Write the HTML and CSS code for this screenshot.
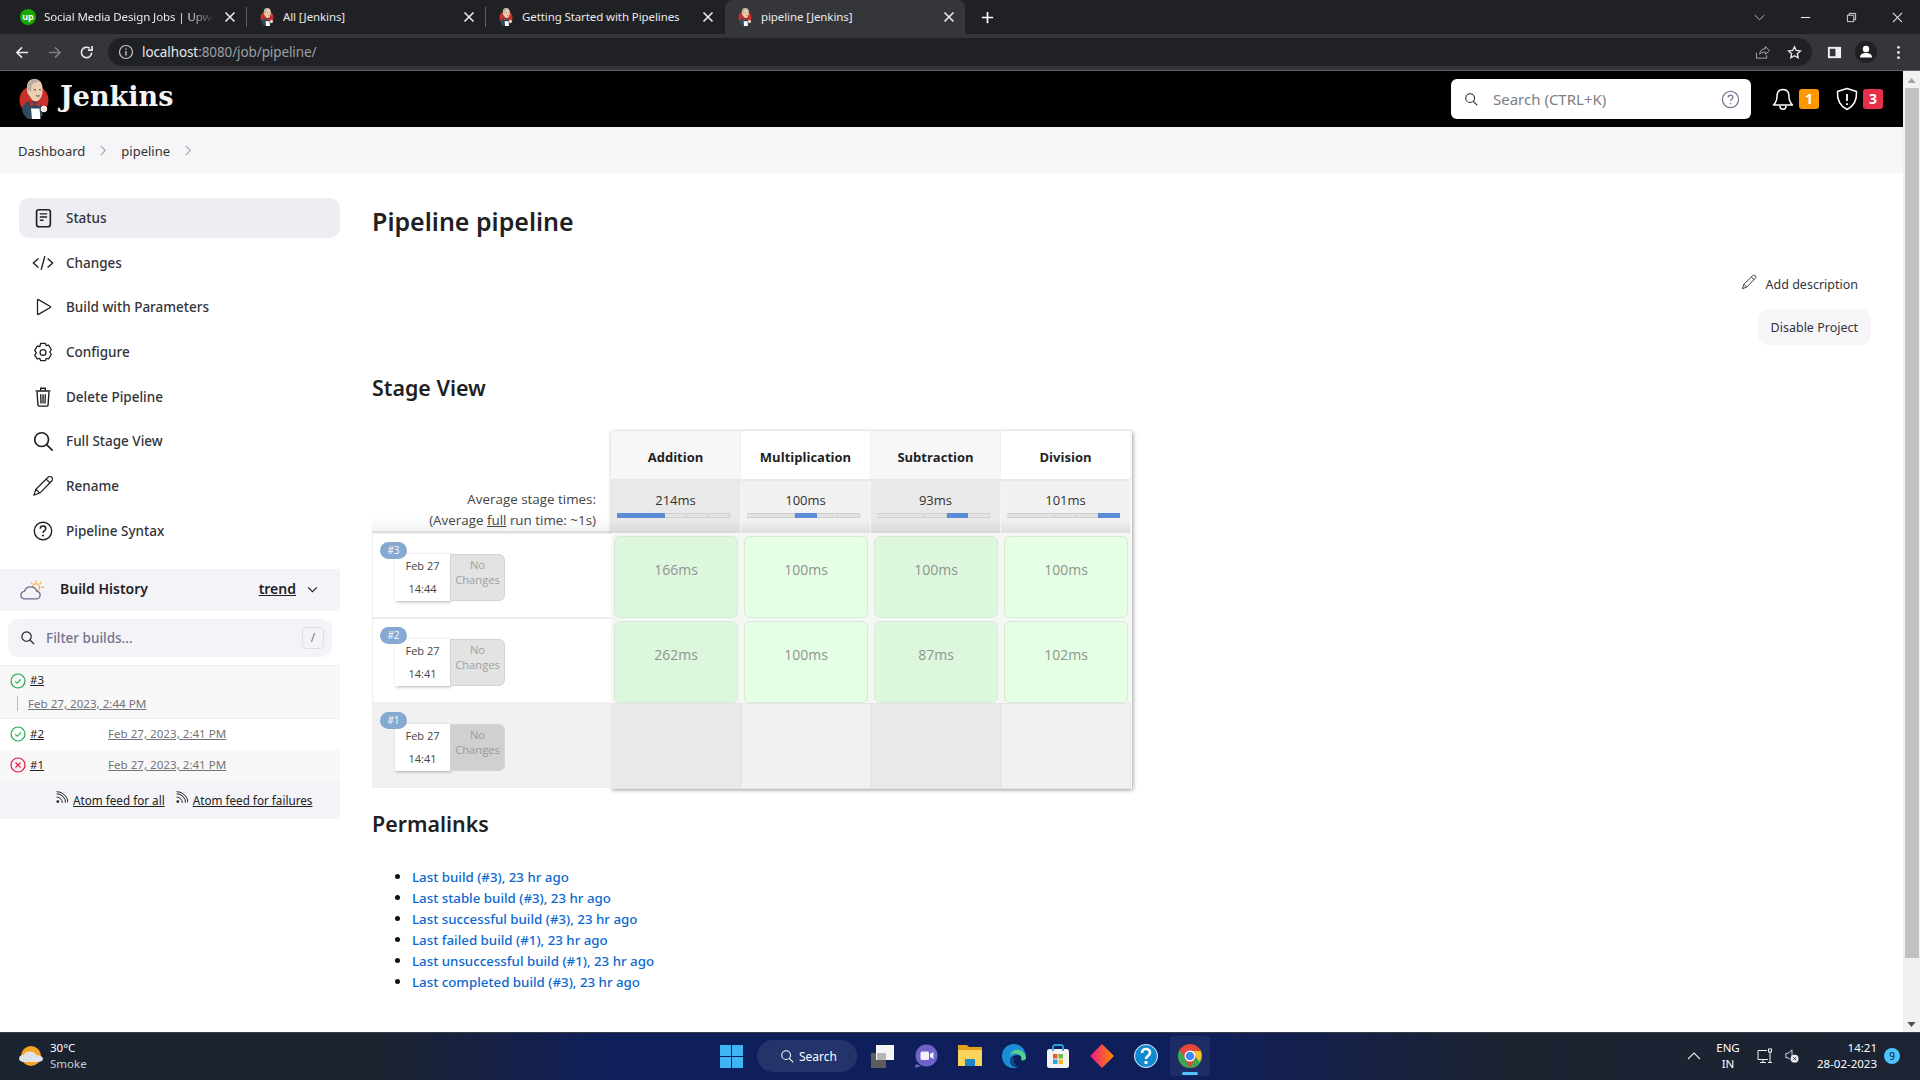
FILE: index.html
```html
<!DOCTYPE html>
<html lang="en">
<head>
<meta charset="utf-8">
<title>pipeline [Jenkins]</title>
<link rel="stylesheet" href="styles.css">
</head>
<body>
<svg class="defs" width="0" height="0" aria-hidden="true">
  <defs>
    <symbol id="jenkins" viewBox="0 0 30 40">
      <circle cx="15" cy="21" r="14.500" fill="#c8302c"/>
      <path d="M3 31c1-6 5-9 10-9l8 2 2 7 1 5-6 4H9c-3-2-5-5-6-9z" fill="#2f4a5c"/>
      <path d="M8 8c0-5 3-8 7.500-8S23 3 23.500 8c.5 4 0 9-2.500 12-2.500 3-6.500 3-8.500 0l-2-3c-2-2-3-5-2.500-9z" fill="#eccfae"/>
      <path d="M8.500 10c-.5-5 2.500-9.500 7-9.500 2.500 0 4.500 1 5.500 2.500-3.500-.5-7 .5-8.500 3.500l-.5 6c-1.500 0-3-1-3.500-2.500z" fill="#b9aca3"/>
      <path d="M14.500 10.500l2.500.5M20 10.500l2 .5M17 16.500c1.500 1 3 .8 4 0" fill="none" stroke="#4a3a30" stroke-width=".9"/>
      <path d="M16 25l-5-2.500V27l5-1.500 5 2v-4.500z" fill="#c8302c"/>
      <path d="M12 29.500h8.500l1 10.500H13z" fill="#fff"/>
      <circle cx="25" cy="30" r="2.800" fill="#f3e3d0" stroke="#fff"/>
    </symbol>
    <symbol id="close" viewBox="0 0 16 16"><path d="M3.500 3.500l9 9M12.500 3.500l-9 9" fill="none" stroke="currentColor" stroke-width="1.600"/></symbol>
    <symbol id="rss" viewBox="0 0 16 16"><circle cx="3.500" cy="13" r="1.700" fill="currentColor"/><path d="M2 7.500a7 7 0 0 1 7 7M2 3.500a11 11 0 0 1 11 11M2 .8a14 14 0 0 1 14 13.700" fill="none" stroke="currentColor" stroke-width="1.200"/></symbol>
    <symbol id="ok" viewBox="0 0 16 16"><circle cx="8" cy="8" r="7" fill="none" stroke="#1ea64b" stroke-width="1.200"/><path d="M5.200 8.300l2 2 3.600-4" fill="none" stroke="#1ea64b" stroke-width="1.100"/></symbol>
    <symbol id="fail" viewBox="0 0 16 16"><circle cx="8" cy="8" r="7" fill="none" stroke="#e6173f" stroke-width="1.200"/><path d="M5.500 5.500l5 5M10.500 5.500l-5 5" fill="none" stroke="#e6173f" stroke-width="1.100"/></symbol>
    <symbol id="search" viewBox="0 0 24 24"><circle cx="10.500" cy="10.500" r="7.500" fill="none" stroke="currentColor" stroke-width="1.800"/><path d="M16 16l6 6" fill="none" stroke="currentColor" stroke-width="1.800" stroke-linecap="round"/></symbol>
    <symbol id="pencil" viewBox="0 0 24 24"><path d="M2 22l2.300-6.500L17.500 2.500c1-1 3-1 4 0s1 3 0 4L8.500 19.700z M15.500 4.500l4 4M4.300 15.500l4.200 4.200" fill="none" stroke="currentColor" stroke-width="1.300" stroke-linejoin="round"/></symbol>
  </defs>
</svg>

<div class="tabstrip">
  <div class="tab">
    <span class="fav-up">up</span>
    <span class="tab-title tab-title-fade">Social Media Design Jobs | Upwo</span>
    <svg class="tab-close"><use href="#close"/></svg>
  </div>
  <span class="tab-sep"></span>
  <div class="tab">
    <svg class="fav"><use href="#jenkins"/></svg>
    <span class="tab-title">All [Jenkins]</span>
    <svg class="tab-close"><use href="#close"/></svg>
  </div>
  <span class="tab-sep"></span>
  <div class="tab">
    <svg class="fav"><use href="#jenkins"/></svg>
    <span class="tab-title">Getting Started with Pipelines</span>
    <svg class="tab-close"><use href="#close"/></svg>
  </div>
  <span class="tab-sep tab-sep-hidden"></span>
  <div class="tab tab-active">
    <svg class="fav"><use href="#jenkins"/></svg>
    <span class="tab-title">pipeline [Jenkins]</span>
    <svg class="tab-close"><use href="#close"/></svg>
  </div>
  <svg class="new-tab" viewBox="0 0 16 16"><path d="M8 2v12M2 8h12" stroke="#fff" stroke-width="1.800" fill="none"/></svg>
  <div class="win-controls">
    <span class="win-btn"><svg viewBox="0 0 12 12"><path d="M1 3.500l5 5 5-5" fill="none" stroke="#c8c8c8"/></svg></span>
    <span class="win-btn"><svg viewBox="0 0 12 12"><path d="M1 6h10" fill="none" stroke="#e8e8e8" stroke-width="1.200"/></svg></span>
    <span class="win-btn"><svg viewBox="0 0 12 12"><path d="M1.500 3.500h7v7h-7zM3.500 3.500v-2h7v7h-2" fill="none" stroke="#e8e8e8"/></svg></span>
    <span class="win-btn"><svg viewBox="0 0 12 12"><path d="M1 1l10 10M11 1L1 11" fill="none" stroke="#e8e8e8" stroke-width="1.100"/></svg></span>
  </div>
</div>

<div class="toolbar">
  <span class="tool-btn"><svg viewBox="0 0 16 16"><path d="M14 8H2.500M7.500 2.500L2 8l5.500 5.500" fill="none" stroke="#e8eaed" stroke-width="1.700"/></svg></span>
  <span class="tool-btn"><svg viewBox="0 0 16 16"><path d="M2 8h11.500M8.500 2.500L14 8l-5.500 5.500" fill="none" stroke="#7b7d80" stroke-width="1.700"/></svg></span>
  <span class="tool-btn"><svg viewBox="0 0 16 16"><path d="M13.500 8A5.500 5.500 0 1 1 11.500 3.700M14 1v4.500H9.500" fill="none" stroke="#e8eaed" stroke-width="1.700"/></svg></span>
  <div class="omnibox">
    <svg class="omni-info" viewBox="0 0 16 16"><circle cx="8" cy="8" r="6.500" fill="none" stroke="#c4c7c5" stroke-width="1.200"/><path d="M8 7v4.500M8 4.500v1.300" stroke="#c4c7c5" stroke-width="1.400"/></svg>
    <span class="omni-url"><span class="omni-host">localhost</span>:8080/job/pipeline/</span>
    <span class="tool-btn"><svg viewBox="0 0 16 16"><path d="M1.500 8v6h11v-3M5 10c0-4 3-6 6-6V1.500L15.500 6 11 10V7.500c-3 0-5 1-6 2.500z" fill="none" stroke="#a9acaf"/></svg></span>
    <span class="tool-btn"><svg viewBox="0 0 16 16"><path d="M8 1.800l1.900 4 4.400.5-3.300 3 .9 4.400L8 11.500l-3.900 2.200.9-4.400-3.300-3 4.400-.5z" fill="none" stroke="#e8eaed" stroke-width="1.400"/></svg></span>
  </div>
  <span class="tool-btn"><svg viewBox="0 0 16 16"><path d="M1 2h14v12H1z" fill="#f1f3f4"/><path d="M3 4h6v8H3z" fill="#35363a"/></svg></span>
  <span class="tool-btn profile"><svg viewBox="-3 -3 22 22"><circle cx="8" cy="8" r="11" fill="#202124"/><circle cx="8" cy="5" r="3.200" fill="#fff"/><path d="M2 13.500c0-3.500 3-4.500 6-4.500s6 1 6 4.500z" fill="#fff"/></svg></span>
  <span class="tool-btn"><svg viewBox="0 0 16 16"><circle cx="8" cy="2.500" r="1.500" fill="#e8eaed"/><circle cx="8" cy="8" r="1.500" fill="#e8eaed"/><circle cx="8" cy="13.500" r="1.500" fill="#e8eaed"/></svg></span>
</div>

<div class="viewport">
  <div class="page">
    <header class="jk-header">
      <a class="brand">
        <svg class="brand-logo"><use href="#jenkins"/></svg>
        <span class="brand-name">Jenkins</span>
      </a>
      <div class="searchbox">
        <svg class="searchbox-icon"><use href="#search"/></svg>
        <span class="searchbox-text">Search (CTRL+K)</span>
        <svg class="searchbox-help" viewBox="0 0 20 20"><circle cx="10" cy="10" r="8.500" fill="none" stroke="#7b7b98" stroke-width="1.400"/><path d="M7.500 7.800c0-1.500 1.100-2.300 2.500-2.300s2.500.9 2.500 2.200c0 2-2.500 2-2.500 3.900" fill="none" stroke="#7b7b98" stroke-width="1.400"/><circle cx="10" cy="14.300" r=".9" fill="#7b7b98"/></svg>
      </div>
      <svg class="hdr-icon" viewBox="0 0 24 24"><path d="M12 2.500c-4 0-6 3-6 7 0 4-1 6-3.500 8.500h19C19 15.500 18 13.500 18 9.500c0-4-2-7-6-7zM9 19c0 2 1.300 3.300 3 3.300s3-1.300 3-3.300" fill="none" stroke="#fff" stroke-width="1.500" stroke-linejoin="round"/></svg>
      <span class="hdr-badge badge-orange">1</span>
      <svg class="hdr-icon hdr-icon-second" viewBox="0 0 24 24"><path d="M12 1.500l9.500 3c.5 8-2.500 14.500-9.500 18C5 19 2 12.500 2.500 4.500z" fill="none" stroke="#fff" stroke-width="1.500" stroke-linejoin="round"/><path d="M12 7v7M12 16.200v1.800" stroke="#fff" stroke-width="1.800"/></svg>
      <span class="hdr-badge badge-red">3</span>
    </header>

    <nav class="crumbs">
      <span>Dashboard</span>
      <svg class="crumb-chev" viewBox="0 0 8 12"><path d="M1.500 1l5 5-5 5" fill="none" stroke="#a5a5ad" stroke-width="1.200"/></svg>
      <span>pipeline</span>
      <svg class="crumb-chev" viewBox="0 0 8 12"><path d="M1.500 1l5 5-5 5" fill="none" stroke="#a5a5ad" stroke-width="1.200"/></svg>
    </nav>

    <div class="content">
      <aside class="sidebar">
        <ul class="side-nav">
          <li class="side-item side-active">
            <svg class="side-icon" viewBox="0 0 24 24"><rect x="5" y="3" width="15" height="18.500" rx="2.500" fill="none" stroke="currentColor" stroke-width="1.800"/><path d="M8.500 7.500h8M8.500 11h8M8.500 14.500h4" stroke="currentColor" stroke-width="1.600"/></svg>
            Status
          </li>
          <li class="side-item">
            <svg class="side-icon" viewBox="0 0 24 24"><path d="M7 7l-5.500 5L7 17M17 7l5.500 5L17 17M14 4.500l-4 15" fill="none" stroke="currentColor" stroke-width="1.500"/></svg>
            Changes
          </li>
          <li class="side-item">
            <svg class="side-icon" viewBox="0 0 24 24"><path d="M6 4.500v15a.6.6 0 0 0 1 .5l13-7.500a.6.6 0 0 0 0-1L7 4a.6.6 0 0 0-1 .5z" fill="none" stroke="currentColor" stroke-width="1.400" stroke-linejoin="round"/></svg>
            Build with Parameters
          </li>
          <li class="side-item">
            <svg class="side-icon" viewBox="0 0 24 24"><path d="M9.500 2.500h5l1 2.500 2.800-.4 2.700 4.700-1.700 2.700 1.700 2.700-2.700 4.700-2.800-.4-1 2.500h-5l-1-2.500-2.800.4L3 15.700l1.700-2.700L3 10.300 5.700 5.600l2.800.4z" fill="none" stroke="currentColor" stroke-width="1.400" stroke-linejoin="round"/><circle cx="12" cy="12.500" r="3.200" fill="none" stroke="currentColor" stroke-width="1.400"/></svg>
            Configure
          </li>
          <li class="side-item">
            <svg class="side-icon" viewBox="0 0 24 24"><path d="M5.500 6.500l1 14.500a1.500 1.500 0 0 0 1.500 1h8a1.500 1.500 0 0 0 1.500-1l1-14.500M4 5.500h16M9.500 5.500V2.500h5v3M9.500 9l.3 10M12 9v10M14.500 9l-.3 10" fill="none" stroke="currentColor" stroke-width="1.500"/></svg>
            Delete Pipeline
          </li>
          <li class="side-item">
            <svg class="side-icon" viewBox="0 0 24 24"><use href="#search"/></svg>
            Full Stage View
          </li>
          <li class="side-item">
            <svg class="side-icon"><use href="#pencil"/></svg>
            Rename
          </li>
          <li class="side-item">
            <svg class="side-icon" viewBox="0 0 24 24"><circle cx="12" cy="12" r="9.500" fill="none" stroke="currentColor" stroke-width="1.500"/><path d="M9 9.500c0-2 1.300-3 3-3s3 1.100 3 2.800c0 2.500-3 2.500-3 4.900" fill="none" stroke="currentColor" stroke-width="1.600"/><circle cx="12" cy="17" r="1.100" fill="currentColor"/></svg>
            Pipeline Syntax
          </li>
        </ul>

        <section class="history">
          <div class="history-head">
            <svg class="weather" viewBox="0 0 28 24"><g stroke="#f9a825" stroke-width="1.300" fill="none"><circle cx="18" cy="9" r="4"/><path d="M18 1v2.500M24 3l-1.800 1.800M27 9h-3M12.500 3.500l1.500 1.500"/></g><path d="M6 22c-3 0-5-1.800-5-4.300 0-2.300 1.800-4 4-4.200C6 10 9 8.500 12 8.500c3.500 0 6 2 6.800 5 2.200.2 3.700 2 3.700 4.100 0 2.500-2 4.400-4.500 4.400z" fill="#f3f3f8" stroke="#6d6b8d" stroke-width="1.500"/></svg>
            <span class="history-title">Build History</span>
            <span class="history-trend">trend</span>
            <svg class="history-chev" viewBox="0 0 12 8"><path d="M1 1.500l5 5 5-5" fill="none" stroke="#222" stroke-width="1.300"/></svg>
          </div>
          <div class="filter">
            <svg class="filter-icon"><use href="#search"/></svg>
            <span class="filter-text">Filter builds...</span>
            <span class="filter-key">/</span>
          </div>
          <div class="build build-stack">
            <div class="build-line">
              <svg class="build-icon"><use href="#ok"/></svg>
              <a class="build-no">#3</a>
            </div>
            <div class="build-sub"><a class="build-date">Feb 27, 2023, 2:44 PM</a></div>
          </div>
          <div class="build build-plain">
            <svg class="build-icon"><use href="#ok"/></svg>
            <a class="build-no">#2</a>
            <a class="build-date build-date-col">Feb 27, 2023, 2:41 PM</a>
          </div>
          <div class="build build-alt">
            <svg class="build-icon"><use href="#fail"/></svg>
            <a class="build-no">#1</a>
            <a class="build-date build-date-col">Feb 27, 2023, 2:41 PM</a>
          </div>
          <div class="feeds">
            <svg class="feed-icon"><use href="#rss"/></svg><a class="feed-link">Atom feed for all</a>
            <svg class="feed-icon feed-icon-second"><use href="#rss"/></svg><a class="feed-link">Atom feed for failures</a>
          </div>
        </section>
      </aside>

      <main class="main">
        <h1 class="title">Pipeline pipeline</h1>
        <div class="actions">
          <div class="add-desc"><svg class="add-desc-icon"><use href="#pencil"/></svg>Add description</div>
          <div class="disable-btn">Disable Project</div>
        </div>
        <h2 class="section stage-heading">Stage View</h2>

        <div class="stage">
          <div class="stage-left">
            <div class="stage-spacer"></div>
            <div class="avg-labels">
              <div>Average stage times:</div>
              <div>(Average <u>full</u> run time: ~1s)</div>
            </div>
            <div class="run">
              <span class="run-badge">#3</span>
              <div class="run-date"><span>Feb 27</span><span>14:44</span></div>
              <div class="run-changes">No<br>Changes</div>
            </div>
            <div class="run">
              <span class="run-badge">#2</span>
              <div class="run-date"><span>Feb 27</span><span>14:41</span></div>
              <div class="run-changes">No<br>Changes</div>
            </div>
            <div class="run run-failed">
              <span class="run-badge">#1</span>
              <div class="run-date"><span>Feb 27</span><span>14:41</span></div>
              <div class="run-changes">No<br>Changes</div>
            </div>
          </div>

          <div class="stage-grid">
            <div class="st-head odd">Addition</div>
            <div class="st-head">Multiplication</div>
            <div class="st-head odd">Subtraction</div>
            <div class="st-head">Division</div>

            <div class="st-avg odd">214ms<div class="bar"><i class="s1 on"></i><i class="s2"></i><i class="s3"></i><i class="s4"></i></div></div>
            <div class="st-avg">100ms<div class="bar"><i class="s1"></i><i class="s2 on"></i><i class="s3"></i><i class="s4"></i></div></div>
            <div class="st-avg odd">93ms<div class="bar"><i class="s1"></i><i class="s2"></i><i class="s3 on"></i><i class="s4"></i></div></div>
            <div class="st-avg">101ms<div class="bar"><i class="s1"></i><i class="s2"></i><i class="s3"></i><i class="s4 on"></i></div></div>

            <div class="st-cell odd"><div class="st-ok">166ms</div></div>
            <div class="st-cell"><div class="st-ok">100ms</div></div>
            <div class="st-cell odd"><div class="st-ok">100ms</div></div>
            <div class="st-cell"><div class="st-ok">100ms</div></div>

            <div class="st-cell odd"><div class="st-ok">262ms</div></div>
            <div class="st-cell"><div class="st-ok">100ms</div></div>
            <div class="st-cell odd"><div class="st-ok">87ms</div></div>
            <div class="st-cell"><div class="st-ok">102ms</div></div>

            <div class="st-empty odd"></div>
            <div class="st-empty"></div>
            <div class="st-empty odd"></div>
            <div class="st-empty"></div>
          </div>
        </div>

        <h2 class="section perma-heading">Permalinks</h2>
        <ul class="permalinks">
          <li><a>Last build (#3), 23 hr ago</a></li>
          <li><a>Last stable build (#3), 23 hr ago</a></li>
          <li><a>Last successful build (#3), 23 hr ago</a></li>
          <li><a>Last failed build (#1), 23 hr ago</a></li>
          <li><a>Last unsuccessful build (#1), 23 hr ago</a></li>
          <li><a>Last completed build (#3), 23 hr ago</a></li>
        </ul>
      </main>
    </div>
  </div>
  <div class="scrollbar">
    <svg class="scroll-arrow" viewBox="0 0 10 6"><path d="M0 6l5-6 5 6z" fill="#a3a3a3"/></svg>
    <div class="scroll-thumb"></div>
    <svg class="scroll-arrow" viewBox="0 0 10 6"><path d="M0 0l5 6 5-6z" fill="#505050"/></svg>
  </div>
</div>

<footer class="taskbar">
  <div class="tb-left">
    <svg class="tb-weather" viewBox="0 0 24 20"><circle cx="12" cy="10" r="10" fill="#f6a623"/><path d="M4 20a9 3 0 0 0 16 0z" fill="#f0750f"/><path d="M5 16c-3 0-5-1.500-5-3.500S2 9 4.500 9C5.500 6.500 8 5.500 11 5.500c3.500 0 5.500 1.500 6.500 3.700 3.500 0 6.500 1.300 6.500 3.500S21.500 16 19 16z" fill="#dfe3e8"/></svg>
    <div class="tb-temp"><div>30°C</div><div class="tb-cond">Smoke</div></div>
  </div>
  <div class="tb-center">
    <svg class="tb-win" viewBox="0 0 24 24"><path d="M0 0h11.500v11.500H0zM12.500 0H24v11.500H12.500zM0 12.500h11.500V24H0zM12.500 12.500H24V24H12.500z" fill="#3fb5f4"/></svg>
    <div class="tb-search"><svg class="tb-search-icon"><use href="#search"/></svg>Search</div>
    <span class="tb-app"><svg viewBox="0 0 24 24"><path d="M1 9h15v15H1z" fill="#5c5c5c"/><path d="M6 1h18v15H6z" fill="#f4f4f4"/><path d="M7 9h9v7H7z" fill="#b5b5b5"/></svg></span>
    <span class="tb-app"><svg viewBox="0 0 24 24"><circle cx="12.500" cy="11.500" r="11" fill="#6e63c9"/><path d="M2 20l-1 4 6-2z" fill="#6e63c9"/><rect x="6.500" y="7.500" width="8.500" height="8.500" rx="1.500" fill="#f3f0ff"/><path d="M16 10l3.500-2v7L16 13z" fill="#f3f0ff"/></svg></span>
    <span class="tb-app"><svg viewBox="0 0 24 24"><path d="M0 1h9l2 2h13v19H0z" fill="#e3a11b"/><path d="M0 6h24v16H0z" fill="#fbd35a"/><path d="M7 15h10v7H7z" fill="#1a86c8"/></svg></span>
    <span class="tb-app"><svg viewBox="0 0 24 24"><path d="M12 0C5 0 0 5 0 12c0 7 5 12 11 12 3 0 5-1 6-1-5 1-9-2-9-6 0-3 3-6 7-6 3 0 5 1 5 3h4C24 5 19 0 12 0z" fill="#1b8ed6"/><path d="M8 11c1-4 5-6 9-5 4 1 7 4 7 8 0 2-3 3-5 2 1-2 0-5-3-6-3-1-6 0-8 1z" fill="#52d28a"/><path d="M8 16c0 4 4 7 9 7-3-1-5-3-5-6 0-1 0-2 1-3-2 0-5 0-5 2z" fill="#0d4f8e"/></svg></span>
    <span class="tb-app"><svg viewBox="0 0 24 24"><rect x="1" y="5" width="22" height="19" rx="2.500" fill="#f2f2f2"/><path d="M7 7V3a2 2 0 0 1 2-2h6a2 2 0 0 1 2 2v4" fill="none" stroke="#2aa5e0" stroke-width="1.800"/><path d="M7 10h4.500v4.500H7z" fill="#ee5a2b"/><path d="M12.500 10H17v4.500h-4.500z" fill="#6ebd3e"/><path d="M7 15.500h4.500V20H7z" fill="#2aa5e0"/><path d="M12.500 15.500H17V20h-4.500z" fill="#f7b52a"/></svg></span>
    <span class="tb-app"><svg viewBox="0 0 24 24"><defs><linearGradient id="dia" x1="0" y1="0" x2="1" y2="0"><stop offset="0" stop-color="#f0168a"/><stop offset="1" stop-color="#ff8a00"/></linearGradient></defs><path d="M12 0l12 12-12 12L0 12z" fill="url(#dia)"/></svg></span>
    <span class="tb-app"><svg viewBox="0 0 24 24"><circle cx="12" cy="12" r="11.500" fill="#0f8ad0" stroke="#e8f4fb"/><path d="M8 9c0-2.500 1.800-4 4-4s4 1.500 4 3.500c0 3.500-4 3.500-4 6.500" fill="none" stroke="#fff" stroke-width="2.600"/><circle cx="12" cy="18.500" r="1.700" fill="#fff"/></svg></span>
    <span class="tb-app tb-app-active"><svg viewBox="0 0 24 24"><circle cx="12" cy="12" r="12" fill="#e5473b"/><path d="M12 24A12 12 0 0 1 1.600 6L7 14.500 12 24z" fill="#34a853"/><path d="M12 24l5.500-10L22.500 6A12 12 0 0 1 12 24z" fill="#34a853"/><path d="M12 7h10.500a12 12 0 0 1-1 11l-4-5.500C17 10 15 8 12 7z" fill="#fbc02d"/><circle cx="12" cy="12" r="5.500" fill="#fff"/><circle cx="12" cy="12" r="4.300" fill="#4285f4"/></svg></span>
  </div>
  <div class="tb-right">
    <svg class="tray-chev" viewBox="0 0 14 8"><path d="M1 7l6-6 6 6" fill="none" stroke="#e8e8e8" stroke-width="1.100"/></svg>
    <div class="tray-lang"><div>ENG</div><div>IN</div></div>
    <svg class="tray-net" viewBox="0 0 16 16"><path d="M10 2.500H1v9h10M6 11.500V14M3 14.500h6" fill="none" stroke="#f0f0f0"/><rect x="11.500" y="1" width="3" height="3" fill="none" stroke="#f0f0f0"/><path d="M13 4v10M11 14.500h4" stroke="#f0f0f0"/></svg>
    <svg class="tray-vol" viewBox="0 0 16 16"><path d="M1 5h2.500L8 1v9" fill="none" stroke="#f0f0f0"/><path d="M1 5v5h2.500L6 12" fill="none" stroke="#f0f0f0"/><circle cx="11" cy="11" r="4.500" fill="#f0f0f0"/><path d="M9 9l4 4M13 9l-4 4" stroke="#1c2431"/></svg>
    <div class="tray-clock"><div>14:21</div><div>28-02-2023</div></div>
    <span class="tray-notif">9</span>
  </div>
</footer>
</body>
</html>
```

FILE: styles.css
```css
* { box-sizing: border-box; }
html, body { margin: 0; height: 100%; overflow: hidden; }
body {
  display: flex;
  flex-direction: column;
  height: 1080px;
  font-family: "Noto Sans", "Open Sans", sans-serif;
  font-size: 14px;
  color: #333;
  background: #fff;
}
.defs { position: absolute; }
svg { display: block; flex: none; }
ul { list-style: none; margin: 0; padding: 0; }
a { color: inherit; }

/* browser tab strip */
.tabstrip {
  flex: none;
  height: 34px;
  display: flex;
  align-items: center;
  padding-left: 8px;
  background: #202124;
  color: #e8eaed;
  font-size: 12px;
}
.tab {
  width: 238px;
  height: 34px;
  display: flex;
  align-items: center;
  gap: 8px;
  padding: 0 8px 0 12px;
}
.tab-active {
  width: 240px;
  background: #35363a;
  border-radius: 8px 8px 0 0;
}
.tab-sep { width: 1px; height: 20px; background: #5f6368; }
.tab-sep-hidden { background: transparent; }
.tab-title { flex: 1; min-width: 0; white-space: nowrap; font-size: 11.500px; letter-spacing: -.1px; line-height: 16px; margin-top: -1px; }
.tab-title-fade { -webkit-mask-image: linear-gradient(90deg, #000 85%, transparent); mask-image: linear-gradient(90deg, #000 85%, transparent); }
.tab-close { width: 16px; height: 16px; color: #e8eaed; }
.fav { width: 16px; height: 18px; }
.fav-up {
  width: 16px; height: 16px; border-radius: 50%;
  background: #14a800; color: #fff;
  font-size: 9px; line-height: 15px; text-align: center; font-weight: 700;
}
.new-tab { width: 15px; height: 15px; margin-left: 15px; }
.win-controls { margin-left: auto; display: flex; }
.win-btn { width: 46px; height: 34px; display: flex; align-items: center; justify-content: center; }
.win-btn svg { width: 11px; height: 11px; }

/* browser toolbar */
.toolbar {
  flex: none;
  height: 37px;
  display: flex;
  align-items: flex-start;
  padding: 4px 6px 0;
  background: #35363a;
  border-bottom: 1px solid #5f6368;
}
.tool-btn { width: 32px; height: 28px; display: flex; align-items: center; justify-content: center; }
.tool-btn svg { width: 15px; height: 15px; }
.tool-btn.profile svg { width: 22px; height: 22px; }
.omnibox {
  flex: 1;
  height: 28px;
  margin: 0 6px;
  padding: 0 2px 0 10px;
  display: flex;
  align-items: center;
  border-radius: 14px;
  background: #202124;
  color: #9aa0a6;
}
.omni-info { width: 16px; height: 16px; }
.omni-url { flex: 1; margin-left: 8px; font-size: 13.500px; letter-spacing: -.1px; }
.omni-host { color: #e8eaed; }

/* viewport */
.viewport { flex: 1; min-height: 0; display: flex; }
.page { flex: 1; min-width: 0; display: flex; flex-direction: column; }
.scrollbar { flex: none; width: 17px; background: #f1f1f1; display: flex; flex-direction: column; align-items: center; }
.scroll-arrow { width: 9px; height: 5px; margin: 7px 0 5px; }
.scroll-thumb { width: 14px; height: 870px; background: #c1c1c1; margin-bottom: auto; }

/* jenkins header */
.jk-header {
  flex: none;
  height: 56px;
  display: flex;
  align-items: center;
  padding: 0 20px 0 19px;
  background: #000;
}
.brand { display: flex; align-items: center; gap: 11px; }
.brand-logo { width: 30px; height: 40px; }
.brand-name { font-family: "DejaVu Serif", "Liberation Serif", serif; font-weight: 700; font-size: 27px; line-height: 36px; margin-top: -5px; color: #f4f4f4; }
.searchbox {
  width: 300px; height: 40px;
  margin-left: auto; margin-right: 20px;
  display: flex; align-items: center;
  padding: 0 11px 0 13px;
  background: #fff; border-radius: 6px;
}
.searchbox-icon { width: 14px; height: 14px; color: #222; }
.searchbox-text { flex: 1; margin-left: 15px; font-size: 15px; color: #7d7d86; }
.searchbox-help { width: 19px; height: 19px; }
.hdr-icon { width: 24px; height: 24px; }
.hdr-icon-second { margin-left: 16px; }
.hdr-badge {
  width: 20px; height: 20px; margin-left: 4px;
  border-radius: 3px;
  color: #fff; font-weight: 700; font-size: 14px; line-height: 20px; text-align: center;
}
.badge-orange { background: #ff9800; }
.badge-red { background: #e6304a; }

/* breadcrumbs */
.crumbs {
  flex: none;
  height: 46px;
  display: flex;
  align-items: center;
  padding: 1px 0 0 18px;
  background: #f6f6f9;
  font-size: 13px;
  color: #333;
}
.crumb-chev { width: 8px; height: 11px; margin: 0 14px; }

/* content */
.content { flex: 1; min-height: 0; display: flex; }
.sidebar { flex: none; width: 340px; padding-top: 25px; }

.side-nav { display: flex; flex-direction: column; gap: 4.700px; margin-left: 19px; }
.side-item {
  height: 40px;
  display: flex;
  align-items: center;
  gap: 12px;
  padding-left: 13px;
  border-radius: 10px;
  font-size: 13.500px;
  font-weight: 500;
  color: #33333a;
}
.side-active { background: #ededf3; }
.side-icon { width: 22px; height: 22px; color: #1f1f24; }

.history { margin-top: 18px; }
.history-head {
  height: 42px;
  display: flex;
  align-items: center;
  padding-left: 20px;
  background: #f3f3f8;
}
.weather { width: 25px; height: 22px; }
.history-title { margin: -2px 0 0 15px; font-weight: 600; font-size: 14px; color: #1f1f24; }
.history-trend { margin: -2px 0 0 auto; font-weight: 600; font-size: 14px; text-decoration: underline; color: #1f1f24; }
.history-chev { width: 11px; height: 7px; margin: 0 22px 0 11px; }

.filter {
  height: 38px;
  margin: 8px 8px 8px;
  display: flex;
  align-items: center;
  padding: 0 8px 0 12px;
  border-radius: 10px;
  background: #f3f3f8;
}
.filter-icon { width: 15px; height: 15px; color: #222; }
.filter-text { flex: 1; margin-left: 11px; font-size: 13.500px; font-weight: 500; color: #73738f; }
.filter-key {
  width: 22px; height: 22px;
  border: 1px solid #dedee6; border-radius: 4px;
  text-align: center; line-height: 20px; font-size: 12px; color: #73738f;
}

.build { font-size: 12px; }
.build-stack {
  height: 54px;
  padding: 5px 0 0 10px;
  background: #f8f8f8;
  border-top: 1px solid #eee;
  border-bottom: 1px solid #f0f0f0;
}
.build-line, .build-plain, .build-alt { display: flex; align-items: center; }
.build-line { height: 20px; }
.build-plain, .build-alt { height: 31px; padding: 0 0 2px 10px; }
.build-alt { background: #f8f8f8; }
.build-icon { width: 16px; height: 16px; margin-top: 1px; }
.build-no { margin: -2px 0 0 4px; text-decoration: underline; color: #222; font-size: 11.500px; }
.build-sub {
  height: 15px; margin: 5px 0 0 7px;
  padding-left: 10px;
  border-left: 1px solid #bbb;
  display: flex; align-items: center;
}
.build-date { text-decoration: underline; color: #73737a; font-size: 11.600px; }
.build-date-col { margin-left: 64px; }
.build-plain .build-no, .build-alt .build-no { margin-top: 0; }

.feeds {
  height: 38px;
  display: flex;
  align-items: center;
  padding-left: 55px;
  background: #f3f3f8;
  font-size: 11.700px;
  color: #222;
}
.feed-icon { width: 13px; height: 13px; margin-top: -4px; }
.feed-icon-second { margin-left: 10px; }
.feed-link { margin-left: 5px; text-decoration: underline; }

/* main */
.main { flex: 1; min-width: 0; margin-left: 32px; padding: 29px 32px 0 0; }
.title { margin: 0; font-size: 25px; line-height: 38px; font-weight: 600; color: #1f1f24; }
.section { margin: 0; font-size: 21.400px; line-height: 26px; font-weight: 600; color: #1f1f24; }
.stage-heading { margin-top: 30px; }
.perma-heading { margin-top: 22px; }
.actions { margin-top: 33px; display: flex; flex-direction: column; align-items: flex-end; }
.add-desc { height: 22px; display: flex; align-items: center; padding-right: 13px; font-size: 12.500px; color: #33333a; }
.add-desc-icon { width: 16px; height: 16px; margin-right: 9px; margin-top: -4px; color: #1f1f24; }
.disable-btn {
  height: 36px; margin-top: 14px; padding: 0 13px;
  display: flex; align-items: center;
  border-radius: 10px;
  background: #f6f6f9;
  font-size: 12.500px; color: #33333a;
}

/* stage view */
.stage { margin-top: 30px; display: flex; align-items: flex-start; font-family: "Open Sans", "Noto Sans", sans-serif; }
.stage-left { width: 239px; flex: none; }
.stage-spacer { height: 50px; }
.avg-labels {
  height: 52px; padding: 8px 15px 0 0;
  text-align: right; font-size: 13.400px; line-height: 21px; color: #444;
  border-bottom: 2px solid #ddd;
  background: linear-gradient(#fff 70%, #f4f4f4);
}
.run {
  position: relative;
  height: 85px;
  padding: 20px 0 0 22px;
  display: flex;
  align-items: flex-start;
  border: 1px solid #eee;
  border-width: 1px 0 1px 1px;
  background: #fff;
}
.run-failed { background: #f1f1f1; }
.run-badge {
  position: absolute; left: 7px; top: 8px;
  width: 27px; height: 17px;
  border-radius: 9px;
  background: #85a9d0;
  color: #fff;
  text-align: center; font-size: 10px; line-height: 17px;
}
.run-date {
  width: 55px; height: 47px;
  display: flex; flex-direction: column; align-items: center; justify-content: space-between;
  padding: 3px 0 3px;
  background: #fff;
  box-shadow: 1px 1px 3px rgba(0,0,0,.3);
  font-size: 11px; line-height: 18px; color: #444;
}
.run-changes {
  width: 55px; height: 47px;
  padding-top: 2px;
  border-radius: 0 6px 6px 0;
  background: #e3e3e3;
  border: 1px solid #d4d4d4;
  text-align: center; font-size: 11.200px; line-height: 15px; color: #a0a0a0;
}
.run-failed .run-changes { background: #d0d0d0; color: #9a9a9a; }

.stage-grid {
  width: 521px;
  display: grid;
  grid-template-columns: repeat(4, 130px);
  grid-template-rows: 50px 52px 85px 85px 86px;
  column-gap: 0;
  box-shadow: 1px 1px 4px rgba(0,0,0,.4);
}
.st-head {
  display: flex; align-items: center; justify-content: center;
  padding-top: 3px;
  background: #fff;
  border-bottom: 2px solid #e8e8e8;
  border-right: 1px solid #f0f0f0;
  font-weight: 700; font-size: 13px; color: #1f1f24;
}
.st-head.odd { background: #f7f7f7; }
.st-avg {
  padding: 8px 6px 0;
  text-align: center;
  font-size: 13px; line-height: 22px; color: #333;
  background: linear-gradient(#f1f1f1 75%, #dedede);
  border-right: 1px solid #f5f5f5;
}
.st-avg.odd { background: linear-gradient(#e9e9e9 75%, #d8d8d8); }
.bar { display: flex; height: 5px; margin-top: 2px; }
.bar i { display: block; background: #e3e3e3; border: 1px solid #d0d0d0; border-width: 1px 1px 1px 0; }
.bar .s1 { width: 48px; }
.bar .s2 { width: 22px; }
.bar .s3 { width: 21px; }
.bar .s4 { width: 22px; }
.bar .on { background: #5b8dd6; border-color: #5b8dd6; }
.st-cell { padding: 3px 3px 0; background: #f3f8f3; }
.st-ok {
  height: 82px;
  padding-top: 21px;
  text-align: center;
  border: 1px solid #d7e8d7;
  border-radius: 6px;
  background: #e5ffe5;
  font-size: 14px; line-height: 24px; color: #8f948f;
}
.st-cell.odd .st-ok { background: #ddf7dd; }
.st-empty { background: #f1f1f1; border: 1px solid #e6e6e6; }
.st-empty.odd { background: #e9e9e9; }

/* permalinks */
.permalinks { margin-top: 29px; padding-left: 40px; list-style: disc; color: #111; font-size: 14px; }
.permalinks li { height: 21px; line-height: 21px; }
.permalinks a { color: #0b68d0; font-weight: 500; font-size: 13.300px; }

/* windows taskbar */
.taskbar {
  flex: none;
  height: 48px;
  display: grid;
  grid-template-columns: 720px 1fr 250px;
  align-items: center;
  padding-bottom: 1px;
  border-top: 1px solid #3a3f4a;
  background: linear-gradient(90deg, #1b2230 0, #1b2230 20%, #0f1f5c 32%, #0f1f5c 62%, #1b2230 78%, #1c2433 100%);
  color: #fff;
  font-family: "Noto Sans", sans-serif;
  font-size: 11.500px;
}
.tb-left { display: flex; align-items: center; padding-left: 19px; }
.tb-weather { width: 24px; height: 20px; }
.tb-temp { margin-left: 7px; line-height: 16px; }
.tb-cond { color: #c9ccd2; }
.tb-center { display: flex; align-items: center; }
.tb-win { width: 23px; height: 23px; }
.tb-search {
  width: 100px; height: 32px; margin: 0 3px 0 14px;
  display: flex; align-items: center; gap: 5px;
  padding-left: 23px;
  border-radius: 16px;
  background: rgba(255,255,255,.09);
  font-size: 12px;
}
.tb-search-icon { width: 14px; height: 14px; color: #fff; }
.tb-app { width: 44px; height: 40px; display: flex; align-items: center; justify-content: center; }
.tb-app svg { width: 24px; height: 24px; }
.tb-app-active { position: relative; width: 40px; margin-left: 2px; border-radius: 4px; background: rgba(255,255,255,.06); }
.tb-app-active::after {
  content: ""; position: absolute; left: 12px; bottom: 1px;
  width: 16px; height: 3px; border-radius: 2px; background: #4cc2ff;
}
.tb-right { display: flex; align-items: center; position: relative; }
.tray-chev { width: 14px; height: 8px; margin-left: 17px; }
.tray-lang { width: 30px; margin-left: 12px; text-align: center; line-height: 16px; }
.tray-net { width: 16px; height: 16px; margin-left: 14px; }
.tray-vol { width: 14px; height: 14px; margin-left: 12px; }
.tray-clock { width: 78px; margin-left: 0; text-align: right; line-height: 16px; }
.tray-notif {
  width: 16px; height: 16px; margin-left: 7px;
  border-radius: 50%;
  background: #4cc2ff; color: #10131a;
  text-align: center; font-size: 10px; line-height: 16px;
}
```
